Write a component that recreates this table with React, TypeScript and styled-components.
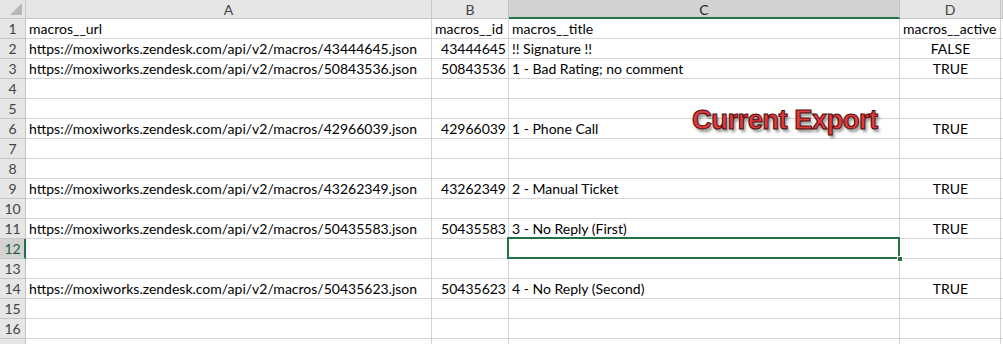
import React from "react";
import styled, { createGlobalStyle, css } from "styled-components";

const Global = createGlobalStyle`
  html, body { margin: 0; padding: 0; background: #fff; overflow: hidden; }
  body { width: 1003px; height: 344px; }
`;

const GREEN = "#217346";
const GRID = "#d4d4d4";
const HDR_BG = "#e6e6e6";
const HDR_SEL = "#d2d2d2";
const HDR_LINE = "#c6c6c6";

const COLS = [26, 406, 77, 391, 101, 2];

const Sheet = styled.div`
  position: relative;
  width: 1003px;
  height: 344px;
  overflow: hidden;
  font-family: Lato, "Liberation Sans", sans-serif;
  font-size: 14px;
  color: #000;
`;

const Row = styled.div<{ $h: number }>`
  display: flex;
  height: ${(p) => p.$h}px;
`;

const Corner = styled.div`
  position: relative;
  box-sizing: border-box;
  width: ${COLS[0]}px;
  flex: none;
  background: ${HDR_BG};
  border-right: 1px solid ${HDR_LINE};
  border-bottom: 1px solid ${HDR_LINE};
  &::after {
    content: "";
    position: absolute;
    right: 3px;
    bottom: 3px;
    width: 0;
    height: 0;
    border-left: 12px solid transparent;
    border-bottom: 12px solid #b7b7b7;
  }
`;

const ColHead = styled.div<{ $w: number; $sel?: boolean }>`
  box-sizing: border-box;
  width: ${(p) => p.$w}px;
  flex: none;
  display: flex;
  align-items: center;
  justify-content: center;
  background: ${HDR_BG};
  border-right: 1px solid ${HDR_LINE};
  border-bottom: 1px solid ${HDR_LINE};
  color: #444;
  font-size: 14px;
  ${(p) =>
    p.$sel &&
    css`
      background: ${HDR_SEL};
      border-bottom: 2px solid ${GREEN};
      padding-top: 1px;
      color: #262626;
    `}
`;

const RowHead = styled.div<{ $sel?: boolean }>`
  box-sizing: border-box;
  width: ${COLS[0]}px;
  flex: none;
  display: flex;
  align-items: center;
  justify-content: center;
  background: ${HDR_BG};
  border-right: 1px solid ${HDR_LINE};
  border-bottom: 1px solid ${HDR_LINE};
  color: #444;
  font-size: 14px;
  ${(p) =>
    p.$sel &&
    css`
      background: ${HDR_SEL};
      border-right: 2px solid ${GREEN};
      padding-left: 1px;
      color: #1e5e3a;
    `}
`;

const Cell = styled.div<{ $w: number; $align?: "left" | "right" | "center"; $sel?: boolean }>`
  position: relative;
  box-sizing: border-box;
  width: ${(p) => p.$w}px;
  flex: none;
  display: flex;
  align-items: center;
  padding: 0 2px 0 3px;
  justify-content: ${(p) =>
    p.$align === "right" ? "flex-end" : p.$align === "center" ? "center" : "flex-start"};
  border-right: 1px solid ${GRID};
  border-bottom: 1px solid ${GRID};
  white-space: nowrap;
  overflow: visible;
  ${(p) =>
    p.$sel &&
    css`
      &::after {
        content: "";
        position: absolute;
        left: -2px;
        top: -2px;
        right: -1px;
        bottom: -1px;
        border: 2px solid ${GREEN};
      }
      &::before {
        content: "";
        position: absolute;
        right: -4px;
        bottom: -4px;
        width: 6px;
        height: 6px;
        background: ${GREEN};
        border: 1px solid #fff;
        z-index: 2;
        box-sizing: border-box;
      }
    `}
`;

const Stamp = styled.div`
  position: absolute;
  left: 692px;
  top: 104px;
  font-family: "Liberation Sans", Arial, sans-serif;
  font-weight: 700;
  font-size: 27.5px;
  letter-spacing: -0.6px;
  color: #e6393d;
  -webkit-text-stroke: 1px #4a0c0c;
  text-shadow: 2px 3px 3px rgba(0, 0, 0, 0.45);
  white-space: nowrap;
`;

type RowData = [string, string, string, string] | null;

const base = "https://moxiworks.zendesk.com/api/v2/macros/";

const rows: RowData[] = [
  ["macros__url", "macros__id", "macros__title", "macros__active"],
  [base + "43444645.json", "43444645", "!! Signature !!", "FALSE"],
  [base + "50843536.json", "50843536", "1 - Bad Rating; no comment", "TRUE"],
  null,
  null,
  [base + "42966039.json", "42966039", "1 - Phone Call", "TRUE"],
  null,
  null,
  [base + "43262349.json", "43262349", "2 - Manual Ticket", "TRUE"],
  null,
  [base + "50435583.json", "50435583", "3 - No Reply (First)", "TRUE"],
  null,
  null,
  [base + "50435623.json", "50435623", "4 - No Reply (Second)", "TRUE"],
  null,
  null,
  [base + "48151412.json", "", "5 - Pending", ""],
];

export default function App() {
  return (
    <>
      <Global />
      <Sheet>
        <Row $h={19}>
          <Corner />
          <ColHead $w={COLS[1]}>A</ColHead>
          <ColHead $w={COLS[2]}>B</ColHead>
          <ColHead $w={COLS[3]} $sel>C</ColHead>
          <ColHead $w={COLS[4]}>D</ColHead>
          <ColHead $w={COLS[5]} />
        </Row>
        {rows.map((r, i) => {
          const n = i + 1;
          const sel = n === 12;
          const header = n === 1;
          return (
            <Row $h={20} key={n}>
              <RowHead $sel={sel}>{n}</RowHead>
              <Cell $w={COLS[1]}>{r ? r[0] : ""}</Cell>
              <Cell $w={COLS[2]} $align={header ? "left" : "right"}>
                {r ? r[1] : ""}
              </Cell>
              <Cell $w={COLS[3]} $sel={sel}>
                {r ? r[2] : ""}
              </Cell>
              <Cell $w={COLS[4]} $align={header ? "left" : "center"}>
                {r ? r[3] : ""}
              </Cell>
              <Cell $w={COLS[5]} />
            </Row>
          );
        })}
        <Stamp>Current Export</Stamp>
      </Sheet>
    </>
  );
}
